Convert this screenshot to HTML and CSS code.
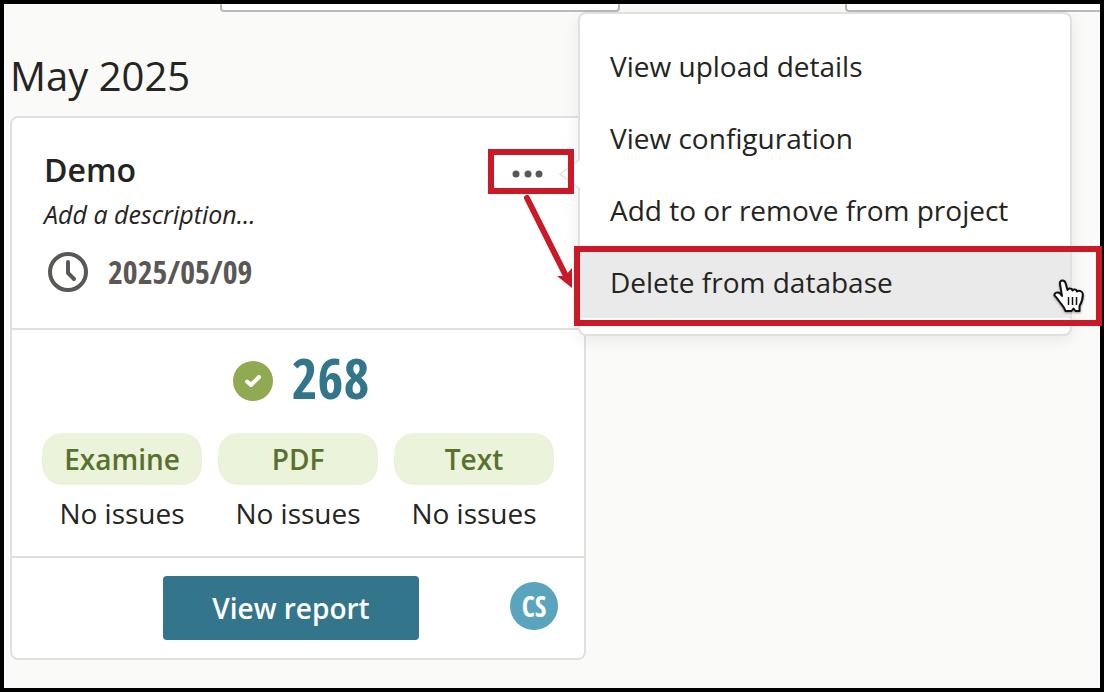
FILE: index.html
```
<!DOCTYPE html>
<html lang="en">
<head>
<meta charset="UTF-8">
<meta name="viewport" content="width=device-width, initial-scale=1.0">
<title>Uploads</title>
<link rel="stylesheet" href="styles.css">
</head>
<body>
<div class="page">
  <div class="filters">
    <input type="text" class="filter search" aria-label="Search">
    <input type="text" class="filter sort" aria-label="Sort">
  </div>
  <main>
    <h1>May 2025</h1>
    <article class="card">
      <header class="card-header">
        <div class="title-row">
          <h2>Demo</h2>
          <div class="more">
            <button class="more-button" aria-label="More actions" aria-expanded="true">
              <svg width="32" height="8" viewBox="0 0 32 8" fill="#595855">
                <circle cx="4" cy="4" r="3.5"/>
                <circle cx="16" cy="4" r="3.5"/>
                <circle cx="27" cy="4" r="3.5"/>
              </svg>
            </button>
            <div class="menu">
              <svg class="menu-arrow" width="22" height="32" viewBox="0 0 22 32">
                <path d="M22 1L2 16l20 15" fill="#fff" stroke="#e0e0df" stroke-width="1.5"/>
              </svg>
              <button class="menu-item">View upload details</button>
              <button class="menu-item">View configuration</button>
              <button class="menu-item">Add to or remove from project</button>
              <button class="menu-item active">Delete from database</button>
            </div>
          </div>
        </div>
        <p class="description">Add a description...</p>
        <div class="date">
          <svg width="40" height="40" viewBox="0 0 40 40" fill="none" stroke="#595855" stroke-width="4">
            <circle cx="20" cy="20" r="18"/>
            <path d="M20 10v11l6 6" stroke-linecap="round" stroke-linejoin="round"/>
          </svg>
          <time datetime="2025-05-09">2025/05/09</time>
        </div>
      </header>
      <section class="results">
        <div class="count">
          <svg width="40" height="40" viewBox="0 0 40 40">
            <circle cx="20" cy="20" r="20" fill="#8faa50"/>
            <path d="M14 20.500l4 3.500 8-8" fill="none" stroke="#fff" stroke-width="4" stroke-linecap="round" stroke-linejoin="round"/>
          </svg>
          <span>268</span>
        </div>
        <div class="checks">
          <div class="check"><span class="pill">Examine</span><p>No issues</p></div>
          <div class="check"><span class="pill">PDF</span><p>No issues</p></div>
          <div class="check"><span class="pill">Text</span><p>No issues</p></div>
        </div>
      </section>
      <footer class="card-footer">
        <button class="report">View report</button>
        <span class="avatar">CS</span>
      </footer>
    </article>
  </main>

  <!-- callouts drawn over the page -->
  <div class="callout callout-more"></div>
  <div class="callout callout-delete"></div>
  <svg class="callout-arrow" width="60" height="100" viewBox="0 0 60 100">
    <path d="M11 8L50 86" stroke="#ca1a27" stroke-width="6" stroke-linecap="round"/>
    <path d="M41 86l8 0 7-8v20z" fill="#ca1a27"/>
  </svg>
  <svg class="pointer" width="34" height="36" viewBox="0 0 34 36">
    <path d="M9 17L7 5C6.300.5 11.300.3 12.500 4l2 7c.5-2 4.500-2 5 .5 1-1.500 4-1.300 4.500 1 2-1.500 5.500-.5 5.800 2.500.2 5-.8 8-3.300 12v5h-4l-2-2.500-2 2.500h-6c-1-4-4-6.500-6.500-10-1.500-2-2.500-4-4.500-5.500C1 13.500 5 12.500 7 14.500z" fill="#fff" stroke="#111" stroke-width="2" stroke-linejoin="round"/>
    <path d="M15.500 18v8M19.500 18v8M23.500 18v8" stroke="#111" stroke-width="1.500"/>
  </svg>
</div>
</body>
</html>
```

FILE: styles.css
```
* {
  box-sizing: border-box;
}
body {
  margin: 0;
  font-family: "Open Sans", "Noto Sans", sans-serif;
  font-size: 28px;
  color: #242421;
}
h1, h2, p {
  margin: 0;
}
button {
  font: inherit;
  color: inherit;
  border: none;
  background: none;
  cursor: pointer;
}
svg {
  display: block;
  flex-shrink: 0;
}
.page {
  position: relative;
  min-height: 100vh;
  border: 4px solid #000;
  background-color: #fafaf8;
}
.filters {
  display: flex;
  justify-content: space-between;
  padding-left: 216px;
}
.filter {
  height: 8px;
  padding: 0;
  border: 2px solid #bbbab7;
  border-top: none;
  border-radius: 0 0 4px 4px;
  background-color: #fff;
}
.search {
  width: 400px;
}
.sort {
  width: 255px;
  border-right: none;
  border-bottom-right-radius: 0;
}
main {
  padding: 24px 6px;
}
h1 {
  font-size: 40px;
  font-weight: 400;
  line-height: 80px;
}
.card {
  max-width: 576px;
  border: 2px solid #e0e0df;
  border-radius: 8px;
  background-color: #fff;
}
.card-header {
  padding: 28px 32px 36px;
  border-bottom: 2px solid #e0e0df;
}
.title-row {
  display: flex;
  justify-content: space-between;
  align-items: center;
}
h2 {
  font-size: 32px;
  font-weight: 600;
  line-height: 48px;
}
.more {
  position: relative;
}
.more-button {
  display: flex;
  align-items: center;
  height: 48px;
  padding: 8px 8px 0;
}
.menu {
  position: absolute;
  top: -134px;
  left: 74px;
  width: 494px;
  padding: 16px 0;
  border: 2px solid #e0e0df;
  border-radius: 8px;
  background-color: #fff;
  box-shadow: 0 4px 16px rgba(0, 0, 0, 0.08);
}
.menu-arrow {
  position: absolute;
  top: 144px;
  left: -22px;
}
.menu-item {
  display: block;
  width: 100%;
  height: 72px;
  padding: 0 30px;
  text-align: left;
}
.menu-item.active {
  background-color: #eaeaea;
}
.description {
  font-size: 25px;
  font-style: italic;
  line-height: 40px;
}
.date {
  display: flex;
  align-items: center;
  gap: 20px;
  height: 40px;
  margin-top: 18px;
  padding-left: 4px;
  font-family: "Open Sans Condensed", "Liberation Sans Narrow", "Open Sans", sans-serif;
  font-size: 32px;
  font-weight: 700;
  color: #595855;
}
.date time {
  padding-bottom: 2px;
}
.results {
  padding: 20px 30px 22px;
  border-bottom: 2px solid #e0e0df;
}
.count {
  display: flex;
  align-items: center;
  justify-content: center;
  gap: 19px;
  height: 62px;
  padding-left: 6px;
  font-family: "Open Sans Condensed", "Liberation Sans Narrow", "Open Sans", sans-serif;
  font-size: 56px;
  font-weight: 700;
  color: #33758b;
}
.count span {
  padding-bottom: 8px;
}
.checks {
  display: flex;
  gap: 16px;
  margin-top: 21px;
}
.check {
  flex: 1;
  text-align: center;
}
.pill {
  display: block;
  border-radius: 20px;
  background-color: #ebf3db;
  color: #58722d;
  font-weight: 600;
  line-height: 52px;
}
.check p {
  margin: 8px 0 1px;
  line-height: 40px;
}
.card-footer {
  display: grid;
  grid-template-columns: 1fr auto 1fr;
  align-items: center;
  padding: 18px 26px 18px 12px;
}
.report {
  grid-column: 2;
  width: 256px;
  height: 64px;
  border-radius: 4px;
  background-color: #33758b;
  color: #fff;
  font-weight: 600;
}
.avatar {
  justify-self: end;
  width: 48px;
  height: 48px;
  margin-bottom: 4px;
  border-radius: 50%;
  background-color: #5aa5bd;
  color: #fff;
  font-family: "Open Sans Condensed", "Liberation Sans Narrow", "Open Sans", sans-serif;
  font-weight: 700;
  line-height: 48px;
  text-align: center;
}
.callout {
  position: absolute;
  border: 6px solid #ca1a27;
}
.callout-more {
  top: 145px;
  left: 484px;
  width: 86px;
  height: 45px;
}
.callout-delete {
  top: 242px;
  left: 570px;
  width: 528px;
  height: 80px;
}
.callout-arrow {
  position: absolute;
  top: 186px;
  left: 512px;
}
.pointer {
  position: absolute;
  top: 275px;
  left: 1049px;
  filter: drop-shadow(0 1px 1px rgba(0, 0, 0, 0.4));
}
```
